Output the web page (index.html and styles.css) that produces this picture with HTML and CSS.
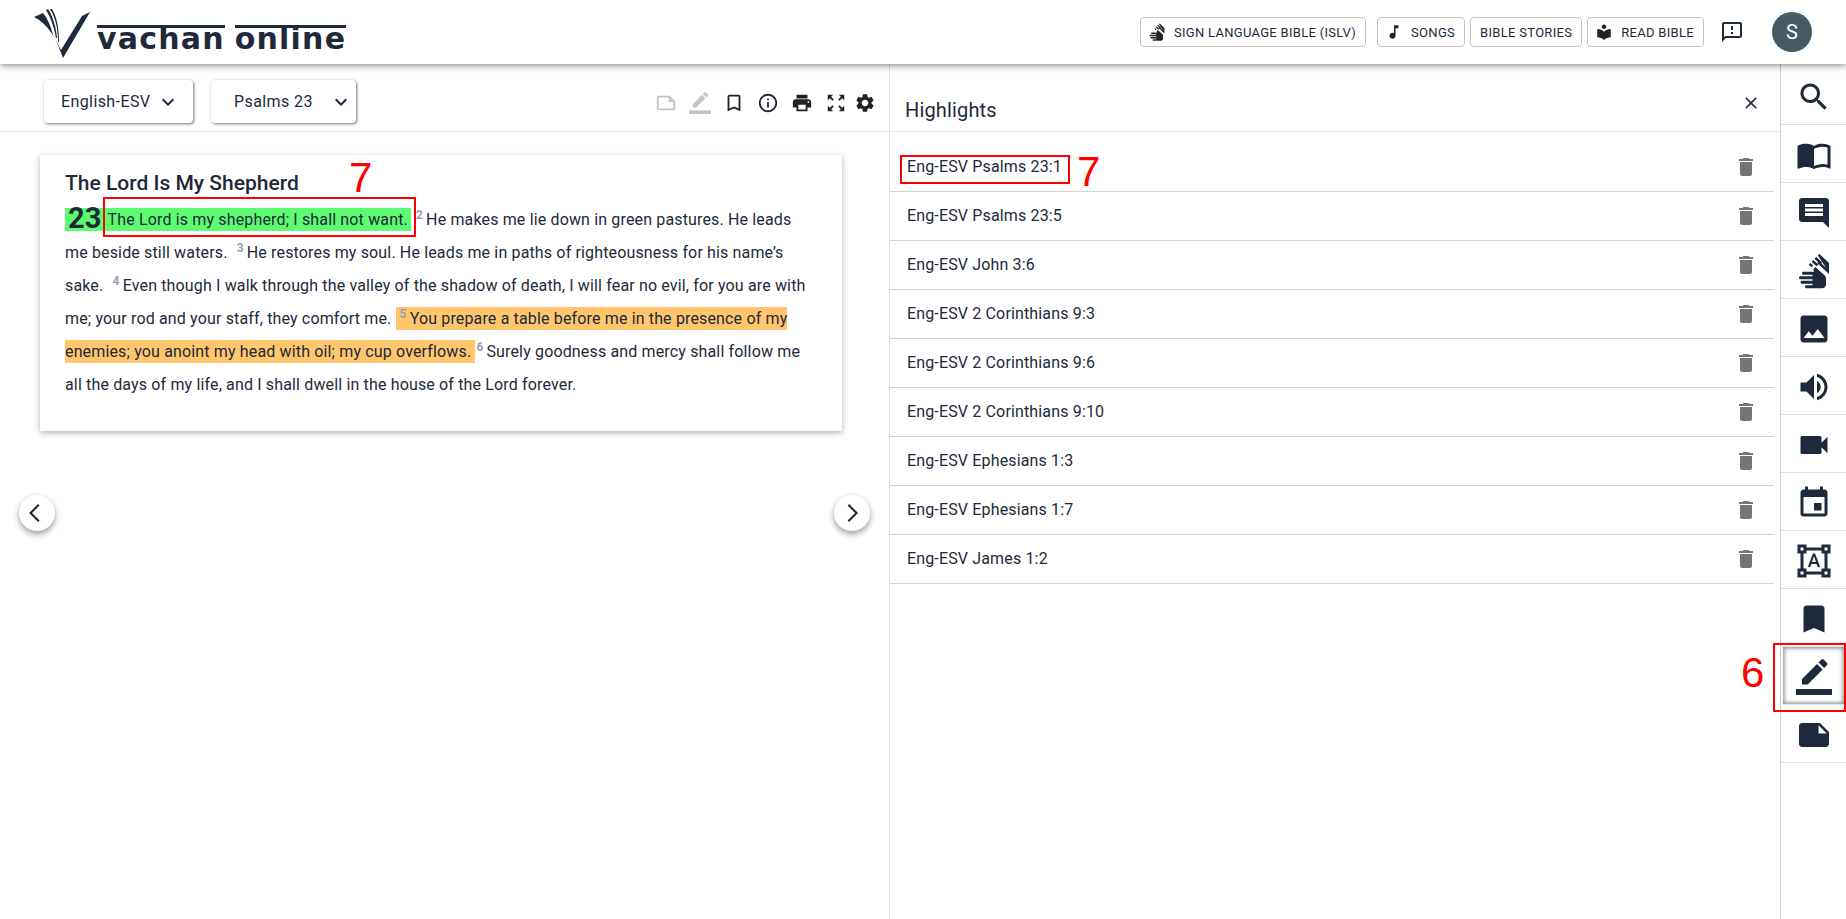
FILE: index.html
```html
<!DOCTYPE html>
<html lang="en">
<head>
<meta charset="UTF-8" />
<meta name="viewport" content="width=device-width, initial-scale=1" />
<title>Vachan Online - Highlights</title>
<link rel="stylesheet" href="styles.css">
</head>
<body>
  <svg class="defs" aria-hidden="true">
    <symbol id="i-search" viewBox="0 0 24 24"><path d="M15.5 14h-.79l-.28-.27C15.41 12.59 16 11.11 16 9.5 16 5.91 13.09 3 9.5 3S3 5.91 3 9.5 5.91 16 9.5 16c1.61 0 3.09-.59 4.23-1.57l.27.28v.79l5 4.99L20.49 19l-4.99-5zm-6 0C7.01 14 5 11.99 5 9.5S7.01 5 9.5 5 14 7.01 14 9.5 11.99 14 9.5 14z"/></symbol>
    <symbol id="i-book" viewBox="0 0 24 24"><path d="M21 5c-1.11-.35-2.33-.5-3.5-.5-1.95 0-4.05.4-5.5 1.5-1.45-1.1-3.55-1.5-5.5-1.5S2.45 4.9 1 6v14.65c0 .25.25.5.5.5.1 0 .15-.05.25-.05C3.1 20.45 5.05 20 6.5 20c1.95 0 4.05.4 5.5 1.5 1.35-.85 3.8-1.5 5.5-1.5 1.65 0 3.35.3 4.75 1.05.1.05.15.05.25.05.25 0 .5-.25.5-.5V6c-.6-.45-1.25-.75-2-1zm0 13.5c-1.1-.35-2.3-.5-3.5-.5-1.7 0-4.15.65-5.5 1.5V8c1.35-.85 3.8-1.5 5.5-1.5 1.2 0 2.4.15 3.5.5v11.5z"/></symbol>
    <symbol id="i-comment" viewBox="0 0 24 24"><path d="M21.99 4c0-1.1-.89-2-1.99-2H4c-1.1 0-2 .9-2 2v12c0 1.1.9 2 2 2h14l4 4-.01-18zM18 14H6v-2h12v2zm0-3H6V9h12v2zm0-3H6V6h12v2z"/></symbol>
    <symbol id="i-sign" viewBox="0 0 24 24"><path d="M12.5 13l-1-2 1.4-1.6 6.1 5.4c.6.5 1 1.3 1 2.1V21c0 1.4-1.1 2.5-2.5 2.5H7c-.6 0-1-.4-1-1s.4-1 1-1h4v-1H4c-.6 0-1-.4-1-1s.4-1 1-1h7v-1H3c-.6 0-1-.4-1-1s.4-1 1-1h8v-1H5c-.6 0-1-.4-1-1s.4-1 1-1h7.500z"/><path d="M14.500 1.500l1.200-.8 6.300 6V14l-7.900-7.300 1.200-1.200 4.700 4.300zM12.300 3.800l1.200-1.200 4 3.700-1.200 1.200zM10.300 5.800l1.200-1.200 3.400 3.100-1.200 1.200zM8.500 7.800l1.100-1.200 1.800 1.700-1.200 1.200z"/></symbol>
    <symbol id="i-image" viewBox="0 0 24 24"><path d="M21 19V5c0-1.1-.9-2-2-2H5c-1.1 0-2 .9-2 2v14c0 1.1.9 2 2 2h14c1.100 0 2-.9 2-2zM8.500 13.500l2.500 3.010L14.500 12l4.500 6H5l3.500-4.500z"/></symbol>
    <symbol id="i-volume" viewBox="0 0 24 24"><path d="M3 9v6h4l5 5V4L7 9H3zm13.500 3c0-1.770-1.020-3.290-2.500-4.030v8.050c1.480-.73 2.500-2.250 2.500-4.020zM14 3.230v2.060c2.890.86 5 3.540 5 6.710s-2.110 5.850-5 6.710v2.060c4.010-.91 7-4.490 7-8.770s-2.990-7.860-7-8.770z"/></symbol>
    <symbol id="i-video" viewBox="0 0 24 24"><path d="M17 10.500V7c0-.55-.45-1-1-1H4c-.55 0-1 .45-1 1v10c0 .55.45 1 1 1h12c.55 0 1-.45 1-1v-3.500l4 4v-11l-4 4z"/></symbol>
    <symbol id="i-event" viewBox="0 0 24 24"><path d="M17 12h-5v5h5v-5zM16 1v2H8V1H6v2H5c-1.110 0-1.990.9-1.990 2L3 19c0 1.100.89 2 2 2h14c1.100 0 2-.9 2-2V5c0-1.100-.9-2-2-2h-1V1h-2zm3 18H5V8h14v11z"/></symbol>
    <symbol id="i-shapes" viewBox="0 0 24 24"><path d="M23 7V1h-6v2H7V1H1v6h2v10H1v6h6v-2h10v2h6v-6h-2V7h2zM3 3h2v2H3V3zm2 18H3v-2h2v2zm12-2H7v-2H5V7h2V5h10v2h2v10h-2v2zm4 2h-2v-2h2v2zM19 5V3h2v2h-2zm-5.270 9h-3.490l-.73 2H7.890l3.400-9h1.400l3.410 9h-1.630l-.74-2zm-3.040-1.260h2.610L12 8.910l-1.310 3.830z"/></symbol>
    <symbol id="i-bookmark" viewBox="0 0 24 24"><path d="M17 3H7c-1.100 0-1.990.9-1.990 2L5 21l7-3 7 3V5c0-1.100-.9-2-2-2z"/></symbol>
    <symbol id="i-bookmark-line" viewBox="0 0 24 24"><path d="M17 3H7c-1.100 0-2 .9-2 2v16l7-3 7 3V5c0-1.100-.9-2-2-2zm0 15l-5-2.180L7 18V5h10v13z"/></symbol>
    <symbol id="i-pencil" viewBox="0 0 24 24"><path d="M17.750 7L14 3.250l-10 10V17h3.750l10-10zm2.960-2.960c.39-.39.39-1.020 0-1.410L18.370.29c-.39-.39-1.020-.39-1.410 0L15 2.250 18.750 6l1.960-1.960z"/><path d="M0 20h24v4H0z"/></symbol>
    <symbol id="i-note" viewBox="0 0 24 24"><path d="M22 10l-6-6H4c-1.100 0-2 .9-2 2v12.010c0 1.100.9 1.990 2 1.990l16-.01c1.100 0 2-.89 2-1.990v-8zm-7-4.500l5.500 5.500H15V5.500z"/></symbol>
    <symbol id="i-note-line" viewBox="0 0 24 24"><path d="M16 4H4c-1.100 0-2 .9-2 2v12.010c0 1.100.9 1.990 2 1.990l16-.01c1.100 0 2-.89 2-1.990V10l-6-6zM4 18.010V6h11v5h5v7.010H4z"/></symbol>
    <symbol id="i-info" viewBox="0 0 24 24"><path d="M11 7h2v2h-2zm0 4h2v6h-2zm1-9C6.480 2 2 6.480 2 12s4.480 10 10 10 10-4.480 10-10S17.520 2 12 2zm0 18c-4.410 0-8-3.590-8-8s3.590-8 8-8 8 3.590 8 8-3.590 8-8 8z"/></symbol>
    <symbol id="i-print" viewBox="0 0 24 24"><path d="M19 8H5c-1.660 0-3 1.340-3 3v6h4v4h12v-4h4v-6c0-1.660-1.340-3-3-3zm-3 11H8v-5h8v5zm3-7c-.55 0-1-.45-1-1s.45-1 1-1 1 .45 1 1-.45 1-1 1zm-1-9H6v4h12V3z"/></symbol>
    <symbol id="i-expand" viewBox="0 0 24 24"><path d="M15 3l2.300 2.300-2.890 2.870 1.420 1.420L18.700 6.700 21 9V3zM3 9l2.300-2.300 2.870 2.890 1.420-1.420L6.700 5.300 9 3H3zm6 12l-2.300-2.300 2.890-2.870-1.420-1.420L5.300 17.300 3 15v6zm12-6l-2.300 2.300-2.870-2.890-1.420 1.420 2.890 2.870L15 21h6z"/></symbol>
    <symbol id="i-settings" viewBox="0 0 24 24"><path d="M19.140 12.940c.04-.3.06-.61.06-.94 0-.32-.02-.64-.07-.94l2.030-1.580c.18-.14.23-.41.12-.61l-1.920-3.320c-.12-.22-.37-.29-.59-.22l-2.390.96c-.5-.38-1.030-.7-1.620-.94l-.36-2.540c-.04-.24-.24-.41-.48-.41h-3.840c-.24 0-.43.17-.47.41l-.36 2.540c-.59.24-1.130.57-1.620.94l-2.390-.96c-.22-.08-.47 0-.59.22L2.740 8.870c-.12.21-.08.47.12.61l2.030 1.580c-.05.3-.09.63-.09.94s.02.64.07.94l-2.030 1.580c-.18.14-.23.41-.12.61l1.920 3.320c.12.22.37.29.59.22l2.390-.96c.5.38 1.030.7 1.620.94l.36 2.540c.05.24.24.41.48.41h3.840c.24 0 .44-.17.47-.41l.36-2.540c.59-.24 1.130-.56 1.620-.94l2.390.96c.22.08.47 0 .59-.22l1.920-3.320c.12-.22.07-.47-.12-.61l-2.010-1.580zM12 15.600c-1.980 0-3.600-1.620-3.600-3.600s1.620-3.600 3.600-3.600 3.600 1.620 3.600 3.600-1.620 3.600-3.600 3.600z"/></symbol>
    <symbol id="i-delete" viewBox="0 0 24 24"><path d="M6 19c0 1.100.9 2 2 2h8c1.100 0 2-.9 2-2V7H6v12zM19 4h-3.500l-1-1h-5l-1 1H5v2h14V4z"/></symbol>
    <symbol id="i-close" viewBox="0 0 24 24"><path d="M19 6.410L17.590 5 12 10.590 6.410 5 5 6.410 10.590 12 5 17.590 6.410 19 12 13.410 17.590 19 19 17.590 13.410 12z"/></symbol>
    <symbol id="i-music" viewBox="0 0 24 24"><path d="M12 3v10.550c-.59-.34-1.270-.55-2-.55-2.210 0-4 1.790-4 4s1.790 4 4 4 4-1.790 4-4V7h4V3h-6z"/></symbol>
    <symbol id="i-reader" viewBox="0 0 24 24"><path d="M12 11.550C9.640 9.350 6.480 8 3 8v11c3.480 0 6.640 1.350 9 3.550 2.360-2.190 5.520-3.550 9-3.550V8c-3.480 0-6.640 1.350-9 3.550zM12 8c1.660 0 3-1.340 3-3s-1.340-3-3-3-3 1.340-3 3 1.340 3 3 3z"/></symbol>
    <symbol id="i-feedback" viewBox="0 0 24 24"><path d="M20 2H4c-1.100 0-1.990.9-1.990 2L2 22l4-4h14c1.100 0 2-.9 2-2V4c0-1.100-.9-2-2-2zm0 14H5.170L4 17.170V4h16v12zM11 12h2v2h-2zm0-6h2v4h-2z"/></symbol>
    <symbol id="i-down" viewBox="0 0 24 24"><path d="M7.410 8.590L12 13.170l4.590-4.580L18 10l-6 6-6-6 1.410-1.410z"/></symbol>
  </svg>

  <header class="topbar">
    <a class="logo" href="#">
      <svg class="logo-mark" viewBox="0 0 56 49">
        <path d="M0 8L9 4C14 10 17 18 19 26L27 41 48 7 56 3 29 49C25 38 21 28 16 22 12 16 6 11 0 8z"/>
        <path d="M12 1L14 0C19 8 22 18 23 29H22C20 18 17 9 12 1zM16 0H18C22 7 25 16 25 33H24C24 18 21 8 16 0z"/>
      </svg>
      <span class="logo-text"><span class="logo-word">vachan</span><span class="logo-word">online</span></span>
    </a>
    <nav class="topnav">
      <button class="navbtn"><svg class="navicon"><use href="#i-sign"/></svg>Sign Language Bible (ISLV)</button>
      <button class="navbtn navbtn-gap"><svg class="navicon"><use href="#i-music"/></svg>Songs</button>
      <button class="navbtn">Bible Stories</button>
      <button class="navbtn"><svg class="navicon"><use href="#i-reader"/></svg>Read Bible</button>
    </nav>
    <svg class="feedback"><use href="#i-feedback"/></svg>
    <div class="avatar">S</div>
  </header>

  <main class="page">
    <section class="reader">
      <div class="toolbar">
        <button class="picker picker-version">English-ESV<svg class="caret"><use href="#i-down"/></svg></button>
        <button class="picker picker-book">Psalms 23<svg class="caret"><use href="#i-down"/></svg></button>
        <div class="tools">
          <svg class="tool tool-off"><use href="#i-note-line"/></svg>
          <svg class="tool tool-off"><use href="#i-pencil"/></svg>
          <svg class="tool"><use href="#i-bookmark-line"/></svg>
          <svg class="tool tool-info"><use href="#i-info"/></svg>
          <svg class="tool"><use href="#i-print"/></svg>
          <svg class="tool"><use href="#i-expand"/></svg>
          <svg class="tool tool-last"><use href="#i-settings"/></svg>
        </div>
      </div>

      <article class="chapter">
        <h2 class="chapter-title">The Lord Is My Shepherd</h2>
        <p class="verses"><span class="chapter-num">23</span><span class="hl-green">The Lord is my shepherd; I shall not want.</span> <sup>2</sup>He makes me lie down in green pastures. He leads me beside still waters. &nbsp;<sup>3</sup>He restores my soul. He leads me in paths of righteousness for his name’s sake. &nbsp;<sup>4</sup>Even though I walk through the valley of the shadow of death, I will fear no evil, for you are with me; your rod and your staff, they comfort me. <span class="hl-orange"><sup>5</sup>You prepare a table before me in the presence of my enemies; you anoint my head with oil; my cup overflows. </span> <sup>6</sup>Surely goodness and mercy shall follow me all the days of my life, and I shall dwell in the house of the Lord forever.</p>
      </article>

      <button class="pager pager-prev"><svg viewBox="0 0 24 24"><path d="M14 3l-9 9 9 9"/></svg></button>
      <button class="pager pager-next"><svg viewBox="0 0 24 24"><path d="M8 3l9 9-9 9"/></svg></button>

      <div class="mark mark-verse"></div>
      <span class="mark-num mark-num-verse">7</span>
    </section>

    <aside class="highlights">
      <div class="highlights-head">
        <h3>Highlights</h3>
        <svg class="close"><use href="#i-close"/></svg>
      </div>
      <ul class="hl-list">
        <li>Eng-ESV Psalms 23:1<svg class="trash"><use href="#i-delete"/></svg></li>
        <li>Eng-ESV Psalms 23:5<svg class="trash"><use href="#i-delete"/></svg></li>
        <li>Eng-ESV John 3:6<svg class="trash"><use href="#i-delete"/></svg></li>
        <li>Eng-ESV 2 Corinthians 9:3<svg class="trash"><use href="#i-delete"/></svg></li>
        <li>Eng-ESV 2 Corinthians 9:6<svg class="trash"><use href="#i-delete"/></svg></li>
        <li>Eng-ESV 2 Corinthians 9:10<svg class="trash"><use href="#i-delete"/></svg></li>
        <li>Eng-ESV Ephesians 1:3<svg class="trash"><use href="#i-delete"/></svg></li>
        <li>Eng-ESV Ephesians 1:7<svg class="trash"><use href="#i-delete"/></svg></li>
        <li>Eng-ESV James 1:2<svg class="trash"><use href="#i-delete"/></svg></li>
      </ul>
      <div class="mark mark-ref"></div>
      <span class="mark-num mark-num-ref">7</span>
      <span class="mark-num mark-num-side">6</span>
    </aside>

    <nav class="sidebar">
      <a class="side-item side-first"><svg><use href="#i-search"/></svg></a>
      <a class="side-item"><svg><use href="#i-book"/></svg></a>
      <a class="side-item"><svg><use href="#i-comment"/></svg></a>
      <a class="side-item"><svg><use href="#i-sign"/></svg></a>
      <a class="side-item"><svg><use href="#i-image"/></svg></a>
      <a class="side-item"><svg><use href="#i-volume"/></svg></a>
      <a class="side-item"><svg><use href="#i-video"/></svg></a>
      <a class="side-item"><svg><use href="#i-event"/></svg></a>
      <a class="side-item"><svg><use href="#i-shapes"/></svg></a>
      <a class="side-item"><svg><use href="#i-bookmark"/></svg></a>
      <a class="side-item side-active"><svg><use href="#i-pencil"/></svg></a>
      <a class="side-item"><svg><use href="#i-note"/></svg></a>
      <div class="mark mark-side"></div>
    </nav>
  </main>
</body>
</html>
```

FILE: styles.css
```css
* {
  box-sizing: border-box;
}
html, body {
  height: 100%;
}
body {
  margin: 0;
  background: #fff;
  color: #1e293b;
  font-family: Roboto, "Liberation Sans", sans-serif;
  font-size: 16px;
  letter-spacing: 0.15px;
  overflow: hidden;
}
.defs {
  position: absolute;
  width: 0;
  height: 0;
}
button {
  font-family: inherit;
  cursor: pointer;
}
svg {
  fill: currentColor;
}

/* Top bar */
.topbar {
  position: relative;
  z-index: 5;
  display: flex;
  align-items: center;
  height: 64px;
  padding-left: 34px;
  background: #fff;
  box-shadow: 0 2px 4px -1px rgba(0, 0, 0, 0.2), 0 4px 5px rgba(0, 0, 0, 0.14), 0 1px 10px rgba(0, 0, 0, 0.12);
}
.logo {
  display: flex;
  align-items: flex-start;
  margin-top: 2px;
  color: #1e293b;
  text-decoration: none;
}
.logo-mark {
  width: 56px;
  height: 49px;
}
.logo-text {
  display: flex;
  gap: 10px;
  margin: 16px 0 0 7px;
  height: 28px;
}
.logo-word {
  border-top: 3px solid #1e293b;
  font-family: "DejaVu Sans", sans-serif;
  font-size: 30px;
  font-weight: 700;
  line-height: 21px;
  letter-spacing: 1.2px;
  color: #1e293b;
}
.topnav {
  display: flex;
  gap: 5px;
  margin-left: auto;
}
.navbtn {
  display: flex;
  align-items: center;
  gap: 8px;
  height: 30px;
  padding: 0 9px;
  background: #fff;
  border: 1px solid #c4c4c4;
  border-radius: 4px;
  color: #1e293b;
  font-size: 13px;
  letter-spacing: 0.3px;
  text-transform: uppercase;
}
.navbtn-gap {
  margin-left: 6px;
}
.navicon {
  width: 18px;
  height: 18px;
  margin-left: -2px;
  color: #222;
}
.feedback {
  width: 24px;
  height: 24px;
  margin-left: 16px;
}
.avatar {
  display: flex;
  align-items: center;
  justify-content: center;
  width: 40px;
  height: 40px;
  margin: 0 34px 0 28px;
  border-radius: 50%;
  background: #455a64;
  color: #fff;
  font-size: 20px;
}

/* Three columns under the top bar */
.page {
  display: flex;
  height: calc(100% - 64px);
}
.reader {
  position: relative;
  flex: 0 0 890px;
  border-right: 1px solid #e0e0e0;
}
.toolbar {
  display: flex;
  align-items: center;
  height: 68px;
  padding: 8px 13px 0 44px;
  border-bottom: 1px solid #e8e8e8;
}
.picker {
  display: flex;
  align-items: center;
  justify-content: space-between;
  height: 43px;
  background: #fff;
  border: 0;
  border-radius: 4px;
  box-shadow: 1px 1px 3px rgba(0, 0, 0, 0.55);
  color: #1e293b;
  font-size: 16px;
  letter-spacing: 0.4px;
}
.picker-version {
  width: 149px;
  padding: 0 13px 0 17px;
}
.picker-book {
  width: 145px;
  margin-left: 18px;
  padding: 0 3px 0 23px;
}
.caret {
  width: 24px;
  height: 24px;
}
.tools {
  display: flex;
  align-items: center;
  gap: 12px;
  margin: 2px 0 0 auto;
}
.tool {
  width: 22px;
  height: 22px;
  color: #222;
}
.tool-off {
  color: #c4c4c4;
}
.tool-info {
  color: #1e293b;
}
.tool-last {
  margin-left: -5px;
}

/* Chapter text */
.chapter {
  width: 802px;
  height: 276px;
  margin: 23px 0 0 40px;
  padding: 14px 25px 0;
  background: #fff;
  box-shadow: 0 2px 6px rgba(0, 0, 0, 0.3);
}
.chapter-title {
  margin: 0;
  font-size: 21px;
  font-weight: 500;
  letter-spacing: 0;
  line-height: 29px;
}
.verses {
  margin: 5px 0 0;
  line-height: 33px;
}
.verses sup {
  margin: 0 3px 0 1px;
  color: #9aa1b0;
  font-size: 12px;
  font-weight: 700;
  line-height: 0;
}
.chapter-num {
  display: inline-block;
  height: 23px;
  padding: 0 3px;
  background: #5cfb70;
  font-size: 29px;
  font-weight: 700;
  line-height: 20px;
  vertical-align: -3px;
}
.hl-green {
  padding: 2px 3px 2px 3px;
  background: #5cfb70;
}
.hl-orange {
  padding: 2px 0 2px 3px;
  background: #ffc66d;
}
.pager {
  position: absolute;
  top: 431px;
  display: flex;
  align-items: center;
  justify-content: center;
  width: 36px;
  height: 36px;
  padding: 0;
  background: #fff;
  border: 0;
  border-radius: 50%;
  box-shadow: 0 3px 6px rgba(0, 0, 0, 0.4);
}
.pager svg {
  width: 22px;
  height: 22px;
  fill: none;
  stroke: #222;
  stroke-width: 2.2;
}
.pager-prev {
  left: 19px;
}
.pager-next {
  left: 834px;
}

/* Highlights panel */
.highlights {
  position: relative;
  flex: 1;
  min-width: 0;
}
.highlights-head {
  display: flex;
  align-items: center;
  justify-content: space-between;
  height: 68px;
  padding: 10px 19px 0 15px;
  border-bottom: 1px solid #e8e8e8;
}
.highlights-head h3 {
  margin: 14px 0 0;
  font-size: 20px;
  font-weight: 400;
}
.close {
  width: 20px;
  height: 20px;
}
.hl-list {
  width: 884px;
  margin: 11px 0 0;
  padding: 0;
  list-style: none;
}
.hl-list li {
  display: flex;
  align-items: center;
  justify-content: space-between;
  height: 49px;
  padding: 0 16px 2px 17px;
  border-bottom: 1px solid #d4d4d4;
}
.trash {
  width: 24px;
  height: 24px;
  margin-top: 2px;
  color: #757575;
}

/* Right icon rail */
.sidebar {
  position: relative;
  flex: 0 0 66px;
  border-left: 1px solid #cfcfcf;
}
.side-item {
  display: flex;
  align-items: center;
  justify-content: center;
  height: 58px;
  padding-top: 2px;
  border-bottom: 1px solid #e0e0e0;
}
.side-item svg {
  width: 36px;
  height: 36px;
}
.side-first {
  height: 61px;
  padding-top: 6px;
}
.side-active {
  margin: 0 2px;
  box-shadow: inset 0 0 4px 1px rgba(0, 0, 0, 0.5);
}

/* Red annotations drawn over the screenshot */
.mark {
  position: absolute;
  border: 2px solid #f00;
}
.mark-num {
  position: absolute;
  color: #f00;
  font-family: "Liberation Sans", sans-serif;
  font-size: 42px;
  line-height: 42px;
}
.mark-verse {
  left: 103px;
  top: 133px;
  width: 313px;
  height: 40px;
}
.mark-num-verse {
  left: 349px;
  top: 93px;
}
.mark-ref {
  left: 10px;
  top: 91px;
  width: 170px;
  height: 29px;
}
.mark-num-ref {
  left: 187px;
  top: 87px;
}
.mark-num-side {
  left: 851px;
  top: 588px;
}
.mark-side {
  left: -8px;
  top: 579px;
  width: 73px;
  height: 69px;
}
```
